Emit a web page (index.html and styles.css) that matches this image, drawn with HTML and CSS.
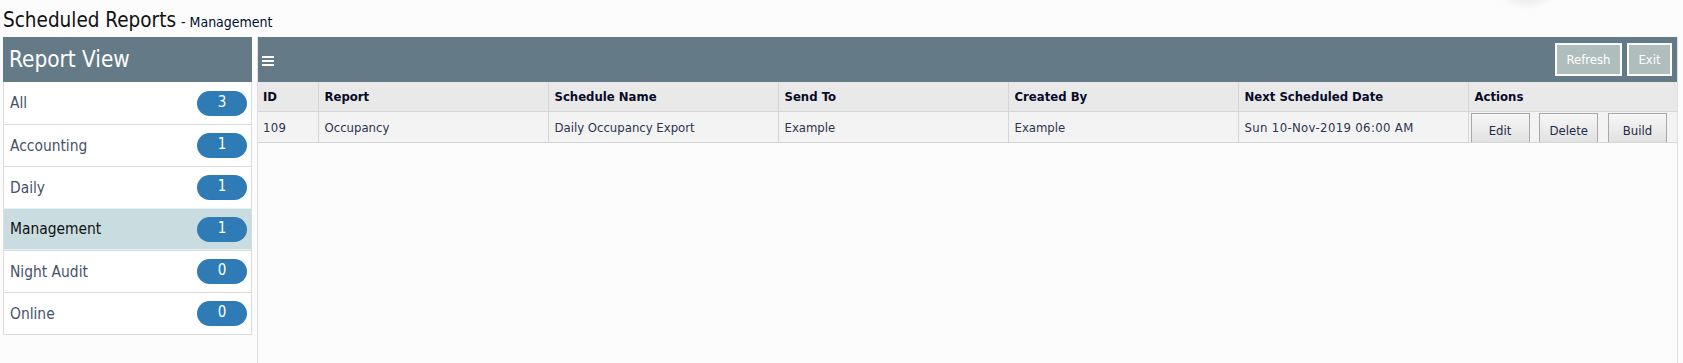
FILE: index.html
```html
<!DOCTYPE html>
<html lang="en">
<head>
    <meta charset="UTF-8">
    <meta name="viewport" content="width=device-width, initial-scale=1.0">
    <title>Scheduled Reports</title>
    <link rel="stylesheet" href="styles.css">
</head>
<body>
    <div class="fab-shadow"></div>

    <div class="page-title">
        <h1>Scheduled Reports</h1>
        <span class="sub-title">- Management</span>
    </div>

    <div class="layout">
        <div class="sidebar">
            <div class="sidebar-header">Report View</div>
            <ul class="report-list">
                <li class="report-item"><span>All</span><span class="badge">3</span></li>
                <li class="report-item"><span>Accounting</span><span class="badge">1</span></li>
                <li class="report-item"><span>Daily</span><span class="badge">1</span></li>
                <li class="report-item active"><span>Management</span><span class="badge">1</span></li>
                <li class="report-item"><span>Night Audit</span><span class="badge">0</span></li>
                <li class="report-item"><span>Online</span><span class="badge">0</span></li>
            </ul>
        </div>

        <div class="main">
            <div class="toolbar">
                <svg class="menu-icon" width="12" height="10" viewBox="0 0 12 10">
                    <rect x="0" y="0" width="12" height="2" fill="#fff"/>
                    <rect x="0" y="4" width="12" height="2" fill="#fff"/>
                    <rect x="0" y="8" width="12" height="2" fill="#fff"/>
                </svg>
                <div class="toolbar-buttons">
                    <button class="bar-btn refresh-btn">Refresh</button>
                    <button class="bar-btn exit-btn">Exit</button>
                </div>
            </div>

            <table class="schedule-table">
                <colgroup>
                    <col class="col-id">
                    <col class="col-wide">
                    <col class="col-wide">
                    <col class="col-wide">
                    <col class="col-wide">
                    <col class="col-wide">
                    <col>
                </colgroup>
                <thead>
                    <tr>
                        <th>ID</th>
                        <th>Report</th>
                        <th>Schedule Name</th>
                        <th>Send To</th>
                        <th>Created By</th>
                        <th>Next Scheduled Date</th>
                        <th>Actions</th>
                    </tr>
                </thead>
                <tbody>
                    <tr>
                        <td class="num">109</td>
                        <td>Occupancy</td>
                        <td>Daily Occupancy Export</td>
                        <td>Example</td>
                        <td>Example</td>
                        <td class="num">Sun 10-Nov-2019 06:00 AM</td>
                        <td class="actions">
                            <button class="row-btn">Edit</button>
                            <button class="row-btn">Delete</button>
                            <button class="row-btn">Build</button>
                        </td>
                    </tr>
                </tbody>
            </table>
        </div>
    </div>
</body>
</html>
```

FILE: styles.css
```css
body {
    font-family: "DejaVu Sans Condensed", "DejaVu Sans", sans-serif;
    font-stretch: condensed;
    margin: 0;
    padding: 0;
    height: 363px;
    overflow: hidden;
    background-color: #fcfcfc;
    color: #333;
}

/* faint shadow of a floating button at the top */
.fab-shadow {
    position: absolute;
    left: 1492px;
    top: -40px;
    width: 70px;
    height: 50px;
    border-radius: 50%;
    background: radial-gradient(closest-side, rgba(0, 0, 0, 0.14), rgba(0, 0, 0, 0));
}

.page-title {
    display: flex;
    align-items: baseline;
    gap: 5px;
    height: 37px;
    padding-left: 3px;
    box-sizing: border-box;
    padding-top: 8px;
}

.page-title h1 {
    margin: 0;
    font-size: 20.5px;
    font-weight: normal;
    color: #111;
}

.sub-title {
    font-size: 14px;
    color: #001030;
}

.layout {
    display: flex;
    gap: 5px;
    padding: 0 5px 0 3px;
    height: 326px;
}

.sidebar {
    width: 249px;
    flex-shrink: 0;
}

.sidebar-header {
    height: 45px;
    background-color: #647a87;
    color: #fff;
    font-size: 22.4px;
    line-height: 45px;
    padding-left: 6px;
}

.report-list {
    list-style: none;
    margin: 0;
    padding: 0;
    border: 1px solid #dcdcdc;
    border-top: none;
    background-color: #fff;
}

.report-item {
    display: flex;
    justify-content: space-between;
    align-items: center;
    height: 41px;
    padding: 0 4px 0 6px;
    font-size: 15.4px;
    color: #45526a;
    border-top: 1px solid #dcdcdc;
}

.report-item:first-child {
    border-top: none;
    height: 42px;
}

.report-item.active {
    background-color: #c9dde1;
    color: #111;
    border-top-color: #e3f3f5;
    border-bottom: 1px solid #e3f3f5;
    height: 40px;
}

.badge {
    width: 50px;
    height: 25px;
    line-height: 22px;
    border-radius: 13px;
    background-color: #2f7bb6;
    color: #fff;
    text-align: center;
    font-size: 15px;
}

.main {
    flex: 1;
    border-left: 1px solid #e0e0e0;
    border-right: 1px solid #e0e0e0;
    background-color: #fcfcfc;
}

.toolbar {
    display: flex;
    justify-content: space-between;
    align-items: center;
    height: 45px;
    background-color: #647a87;
    padding: 0 5px 0 4px;
}

.menu-icon {
    margin-top: 2px;
}

.toolbar-buttons {
    display: flex;
    gap: 5px;
}

.bar-btn {
    height: 33px;
    border: 2px solid #fff;
    background-color: #b0bdbd;
    color: #fff;
    font-family: inherit;
    font-size: 13px;
    padding: 0 8px;
    cursor: pointer;
}

.refresh-btn {
    width: 67px;
}

.exit-btn {
    width: 45px;
}

.schedule-table {
    width: 100%;
    table-layout: fixed;
    border-collapse: collapse;
    font-size: 13px;
}

.col-id { width: 60px; }
.col-wide { width: 230px; }

.schedule-table th {
    height: 29px;
    background-color: #e9e9e9;
    color: #070b28;
    text-align: left;
    font-weight: bold;
    padding: 0 6px;
    border-left: 1px solid #d6d6d6;
    border-bottom: 1px solid #d6d6d6;
}

.schedule-table td {
    height: 29px;
    background-color: #f3f3f3;
    color: #2c3550;
    padding: 0 6px;
    border-left: 1px solid #d6d6d6;
    border-bottom: 1px solid #d6d6d6;
    white-space: nowrap;
}

.schedule-table th:first-child,
.schedule-table td:first-child {
    border-left: none;
    padding-left: 5px;
}

.schedule-table td.num {
    letter-spacing: 0.35px;
}

.schedule-table td.actions {
    padding: 1px 0 0 2px;
    vertical-align: top;
    height: 29px;
}

.row-btn {
    width: 59px;
    height: 29px;
    margin-right: 6px;
    border: 1px solid #a8a8a8;
    border-bottom: none;
    background: linear-gradient(#f7f7f7, #e1e1e1);
    color: #1e2a48;
    font-family: inherit;
    font-size: 13px;
    padding: 4px 0 0 0;
    cursor: pointer;
}
```
